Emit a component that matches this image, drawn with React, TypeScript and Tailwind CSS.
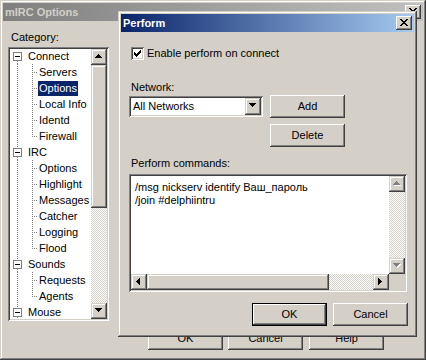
import React from 'react'

const UI_FONT = "[font-family:'Liberation_Sans',Arial,sans-serif] text-[11px] leading-[13px] text-black"

// win2k bevels
const BUTTON_EDGE = 'bg-[#d4d0c8] shadow-[inset_-1px_-1px_#404040,inset_1px_1px_#ffffff,inset_-2px_-2px_#808080,inset_2px_2px_#d4d0c8]'
const SCROLL_EDGE = 'bg-[#d4d0c8] shadow-[inset_-1px_-1px_#404040,inset_1px_1px_#d4d0c8,inset_-2px_-2px_#808080,inset_2px_2px_#ffffff]'
const SUNKEN_EDGE = 'shadow-[inset_1px_1px_#808080,inset_-1px_-1px_#ffffff,inset_2px_2px_#404040,inset_-2px_-2px_#d4d0c8]'
const CHECKER = 'bg-[image:repeating-conic-gradient(#d4d0c8_0%_25%,#ffffff_0%_50%)] bg-[length:2px_2px]'
const DOTS_V = 'bg-[image:linear-gradient(to_bottom,#808080_50%,transparent_50%)] bg-[length:1px_2px]'
const DOTS_H = 'bg-[image:linear-gradient(to_right,#808080_50%,transparent_50%)] bg-[length:2px_1px]'

type Dir = 'up' | 'down' | 'left' | 'right'

const ARROWS: Record<Dir, string> = {
  up: 'M3 0h1v1H3z M2 1h3v1H2z M1 2h5v1H1z M0 3h7v1H0z',
  down: 'M0 0h7v1H0z M1 1h5v1H1z M2 2h3v1H2z M3 3h1v1H3z',
  left: 'M3 0h1v7H3z M2 1h1v5H2z M1 2h1v3H1z M0 3h1v1H0z',
  right: 'M0 0h1v7H0z M1 1h1v5H1z M2 2h1v3H2z M3 3h1v1H3z',
}

function ArrowButton({ dir, w = 16, h = 16, disabled = false, edge = SCROLL_EDGE }: { dir: Dir; w?: number; h?: number; disabled?: boolean; edge?: string }) {
  const vertical = dir === 'up' || dir === 'down'
  const ox = vertical ? Math.floor((w - 7) / 2) : Math.floor((w - 4) / 2) - 1
  const oy = vertical ? Math.floor((h - 4) / 2) - 1 : Math.floor((h - 7) / 2)
  return (
    <div className={`shrink-0 ${edge}`} style={{ width: w, height: h }}>
      <svg width={w} height={h} shapeRendering="crispEdges" className="block">
        {disabled && <path d={ARROWS[dir]} fill="#ffffff" transform={`translate(${ox + 1} ${oy + 1})`} />}
        <path d={ARROWS[dir]} fill={disabled ? '#808080' : '#000000'} transform={`translate(${ox} ${oy})`} />
      </svg>
    </div>
  )
}

function CloseButton() {
  return (
    <div className={`w-[16px] h-[14px] shrink-0 ${BUTTON_EDGE}`}>
      <svg width="16" height="14" shapeRendering="crispEdges" className="block">
        <path
          transform="translate(4 3)"
          d="M0 0h2v1H0z M6 0h2v1H6z M1 1h2v1H1z M5 1h2v1H5z M2 2h4v1H2z M3 3h2v1H3z M2 4h4v1H2z M1 5h2v1H1z M5 5h2v1H5z M0 6h2v1H0z M6 6h2v1H6z"
        />
      </svg>
    </div>
  )
}

function PushButton({ label, isDefault = false }: { label: string; isDefault?: boolean }) {
  return (
    <div
      className={`w-[75px] h-[23px] shrink-0 flex items-center justify-center ${BUTTON_EDGE} ${isDefault ? 'border border-black' : ''}`}
    >
      {label}
    </div>
  )
}

const TREE = [
  { text: 'Connect', level: 0 },
  { text: 'Servers', level: 1 },
  { text: 'Options', level: 1, selected: true },
  { text: 'Local Info', level: 1 },
  { text: 'Identd', level: 1 },
  { text: 'Firewall', level: 1, last: true },
  { text: 'IRC', level: 0 },
  { text: 'Options', level: 1 },
  { text: 'Highlight', level: 1 },
  { text: 'Messages', level: 1 },
  { text: 'Catcher', level: 1 },
  { text: 'Logging', level: 1 },
  { text: 'Flood', level: 1, last: true },
  { text: 'Sounds', level: 0 },
  { text: 'Requests', level: 1 },
  { text: 'Agents', level: 1, last: true },
  { text: 'Mouse', level: 0 },
]

function TreeRow({ text, level, selected, last, first }: { text: string; level: number; selected?: boolean; last?: boolean; first?: boolean }) {
  if (level === 0) {
    return (
      <div className="relative h-[16px] flex items-start leading-[16px]">
        {!first && <span className={`absolute left-[7px] top-0 w-px h-[4px] ${DOTS_V}`} />}
        <span className={`absolute left-[7px] top-[13px] w-px h-[3px] ${DOTS_V}`} />
        <span className="ml-[3px] mt-[4px] w-[9px] h-[9px] border border-[#808080] bg-white flex items-center justify-center">
          <span className="w-[5px] h-px bg-black" />
        </span>
        <span className="ml-[6px]">{text}</span>
      </div>
    )
  }
  return (
    <div className="relative h-[16px] flex items-center leading-[16px]">
      <span className={`absolute left-[7px] top-0 w-px h-[16px] ${DOTS_V}`} />
      <span className={`absolute left-[22px] top-0 w-px ${last ? 'h-[9px]' : 'h-[16px]'} ${DOTS_V}`} />
      <span className={`absolute left-[24px] top-[8px] w-[4px] h-px ${DOTS_H}`} />
      <span
        className={`ml-[28px] h-[15px] leading-[15px] px-[1px] ${selected ? 'bg-[#0a246a] text-white' : ''}`}
      >
        {text}
      </span>
    </div>
  )
}

function OptionsWindow() {
  return (
    <div className={`absolute left-0 top-0 w-[426px] h-[360px] p-[3px] ${SCROLL_EDGE}`}>
      <div className="flex h-[18px] items-center justify-between px-[2px] bg-[image:linear-gradient(to_right,#808080,#c0c0c0)]">
        <span className="font-bold text-[#d4d0c8]">mIRC Options</span>
        <CloseButton />
      </div>

      <div className="pl-[5px] pt-[10px]">
        <div className="pl-[3px]">Category:</div>

        <div className={`mt-[3px] w-[101px] h-[274px] p-[2px] bg-white flex ${SUNKEN_EDGE}`}>
          <div className="flex-1 overflow-hidden -mt-px">
            {TREE.map((item, i) => (
              <TreeRow key={i} {...item} first={i === 0} />
            ))}
          </div>
          <div className="w-[16px] flex flex-col">
            <ArrowButton dir="up" />
            <div className={`h-[143px] shrink-0 ${SCROLL_EDGE}`} />
            <div className={`flex-1 ${CHECKER}`} />
            <ArrowButton dir="down" />
          </div>
        </div>

        <div className="mt-[6px] pl-[140px] flex gap-[5px]">
          <PushButton label="OK" />
          <PushButton label="Cancel" />
          <div className="ml-px">
            <PushButton label="Help" />
          </div>
        </div>
      </div>
    </div>
  )
}

function PerformDialog() {
  return (
    <div className={`absolute left-[118px] top-[11px] w-[299px] h-[326px] p-[3px] ${SCROLL_EDGE}`}>
      <div className="flex h-[18px] items-center justify-between px-[2px] bg-[image:linear-gradient(to_right,#0a246a,#a6caf0)]">
        <span className="font-bold text-white">Perform</span>
        <CloseButton />
      </div>

      <div className="pl-[8px] pr-[6px] pt-[15px]">
        <div className="flex items-center gap-[3px] pl-[2px]">
          <span className={`w-[13px] h-[13px] shrink-0 bg-white ${SUNKEN_EDGE}`}>
            <svg width="13" height="13" shapeRendering="crispEdges" className="block">
              <path d="M9 3h1v1H9z M8 4h2v1H8z M3 5h1v1H3z M7 5h3v1H7z M3 6h2v1H3z M6 6h3v1H6z M3 7h5v1H3z M4 8h3v1H4z M5 9h1v1H5z" />
            </svg>
          </span>
          <span>Enable perform on connect</span>
        </div>

        <div className="mt-[21px] pl-[2px]">Network:</div>

        <div className="flex gap-[7px]">
          <div className={`mt-[2px] w-[134px] h-[21px] p-[2px] bg-white flex items-center ${SUNKEN_EDGE}`}>
            <span className="flex-1 pl-[2px]">All Networks</span>
            <ArrowButton dir="down" w={16} h={17} />
          </div>
          <div className="mt-px flex flex-col gap-[6px]">
            <PushButton label="Add" />
            <PushButton label="Delete" />
          </div>
        </div>

        <div className="mt-[10px] pl-[2px]">Perform commands:</div>

        <div className={`mt-[4px] w-[278px] h-[118px] p-[2px] bg-white flex flex-col ${SUNKEN_EDGE}`}>
          <div className="flex flex-1 min-h-0">
            <div className="flex-1 pl-[4px] pt-[5px] whitespace-pre">
              <div>/msg nickserv identify Ваш_пароль</div>
              <div>/join #delphiintru</div>
            </div>
            <div className="w-[16px] flex flex-col">
              <ArrowButton dir="up" disabled />
              <div className={`flex-1 ${CHECKER}`} />
              <ArrowButton dir="down" disabled />
            </div>
          </div>
          <div className="flex h-[16px] shrink-0">
            <ArrowButton dir="left" />
            <div className={`w-[182px] shrink-0 ${SCROLL_EDGE}`} />
            <div className={`flex-1 ${CHECKER}`} />
            <ArrowButton dir="right" />
            <div className="w-[16px] bg-[#d4d0c8]" />
          </div>
        </div>

        <div className="mt-[11px] flex justify-end gap-[6px]">
          <PushButton label="OK" isDefault />
          <PushButton label="Cancel" />
        </div>
      </div>
    </div>
  )
}

export default function App() {
  return (
    <div className={`relative w-[426px] h-[360px] overflow-hidden bg-[#d4d0c8] ${UI_FONT}`}>
      <OptionsWindow />
      <PerformDialog />
    </div>
  )
}
